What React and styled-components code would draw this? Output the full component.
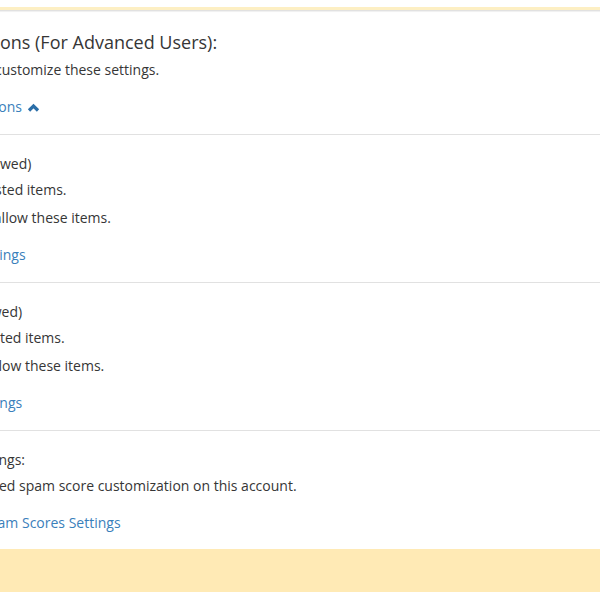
import React from 'react';
import styled, { createGlobalStyle } from 'styled-components';

const GlobalStyle = createGlobalStyle`
    body {
        margin: 0;
        background: #fff;
        font-family: "Open Sans", "Liberation Sans", sans-serif;
        color: #363636;
        overflow: hidden;
    }
`;

// Page scrolled to the right, so the left part of the panel is off screen

const Page = styled.div`
    width: 600px;
    height: 600px;
    overflow: hidden;
    padding-top: 7px;
    box-sizing: border-box;
`;

const NoticeEdge = styled.div`
    height: 3px;
    background: #fdefc3;
`;

const Panel = styled.div`
    margin-left: -183px;
    width: 900px;
    border-top: 1px solid #e1e1e1;
    box-shadow: inset 0 1px 1px #f0f0f0;
`;

const Section = styled.section`
    padding: 19px 0 ${p => (p.$last ? '16px' : '17px')};
    border-bottom: ${p => (p.$last ? 'none' : '1px solid #e1e1e1')};
`;

const Title = styled.h3`
    margin: 0;
    font-size: 18px;
    line-height: 24px;
    font-weight: 400;
`;

const SubTitle = styled.h4`
    margin: 0;
    font-size: 14px;
    line-height: 20px;
    font-weight: 400;
`;

const Text = styled.p`
    margin: ${p => p.$gap || 6}px 0 0;
    font-size: 14px;
    line-height: 20px;
`;

const LinkRow = styled.div`
    margin-top: 17px;
    font-size: 14px;
    line-height: 20px;
`;

const Link = styled.a`
    color: #3a80bb;
    text-decoration: none;
    display: inline-flex;
    align-items: center;
    gap: 5px;
    cursor: pointer;
`;

const Footer = styled.div`
    height: 43px;
    background: #ffeab5;
`;

const ChevronUp = () => (
    <svg width="13" height="9" viewBox="0 0 13 9">
        <polyline points="2,7.5 6.5,3 11,7.5" fill="none" stroke="#2b6ea8" strokeWidth="3.2" />
    </svg>
);

const lists = [
    {
        title: 'Whitelist (Emails Always Allowed)',
        count: 'You currently hold 0 whitelisted items.',
        rule: 'Our spam rules will always allow these items.',
        link: 'Manage Spam Whitelist Settings'
    },
    {
        title: 'Blacklist (Emails Never Allowed)',
        count: 'You currently hold 0 blacklisted items.',
        rule: 'Our spam rules will never allow these items.',
        link: 'Manage Spam Blacklist Settings'
    }
];

export default function App() {
    return (
        <>
            <GlobalStyle />
            <Page>
                <NoticeEdge />
                <Panel>
                    <Section>
                        <Title>Additional Configurations (For Advanced Users):</Title>
                        <Text>Apply the options below to customize these settings.</Text>
                        <LinkRow>
                            <Link>Close Additional Configurations <ChevronUp /></Link>
                        </LinkRow>
                    </Section>
                    {lists.map(item => (
                        <Section key={item.title}>
                            <SubTitle>{item.title}</SubTitle>
                            <Text>{item.count}</Text>
                            <Text $gap={8}>{item.rule}</Text>
                            <LinkRow>
                                <Link>{item.link}</Link>
                            </LinkRow>
                        </Section>
                    ))}
                    <Section $last>
                        <SubTitle>Calculated Spam Score Settings:</SubTitle>
                        <Text>Note: You have not configured spam score customization on this account.</Text>
                        <LinkRow>
                            <Link>Configure the Calculated Spam Scores Settings</Link>
                        </LinkRow>
                    </Section>
                </Panel>
                <Footer />
            </Page>
        </>
    );
}
